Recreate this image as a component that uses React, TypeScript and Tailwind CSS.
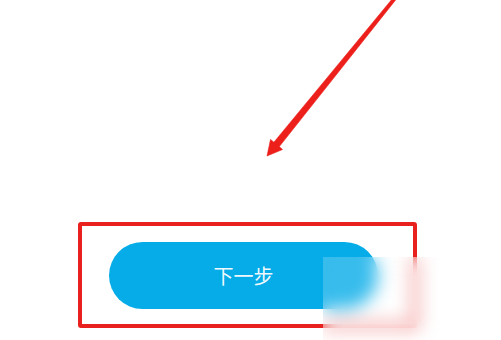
import React from 'react';

/* Red annotation arrow pointing down-left at the button area. */
function Arrow() {
  return (
    <svg className="absolute left-0 top-0 pointer-events-none" width="501" height="340" viewBox="0 0 501 340">
      <polygon
        points="393.8,-3 273.9,142.2 270.5,139.5 267,156 282.5,149.5 279.3,146.6 396.4,-1"
        fill="#ec1f1b"
        stroke="#ec1f1b"
        strokeWidth="0.6"
        strokeLinejoin="round"
      />
    </svg>
  );
}

export default function App() {
  return (
    <div className="relative w-[501px] h-[340px] bg-white overflow-hidden" style={{ fontFamily: '"Noto Sans CJK SC", "Noto Sans", sans-serif' }}>
      <div className="pt-[222px] pl-[78px]">
        <div className="w-[339px] h-[106px] border-4 border-[#e8201e] rounded-[3px] flex items-center pl-[27px]">
          <button className="w-[269px] h-[67px] rounded-full bg-[#06ace8] text-white/95 text-[20px] flex items-center justify-center pt-[2px]">
            下一步
          </button>
        </div>
      </div>
      <Arrow />
      {/* blurred watermark patch */}
      <div className="absolute left-[323px] top-[257px] w-[120px] h-[83px] backdrop-blur-[9px] bg-white/20" />
    </div>
  );
}
